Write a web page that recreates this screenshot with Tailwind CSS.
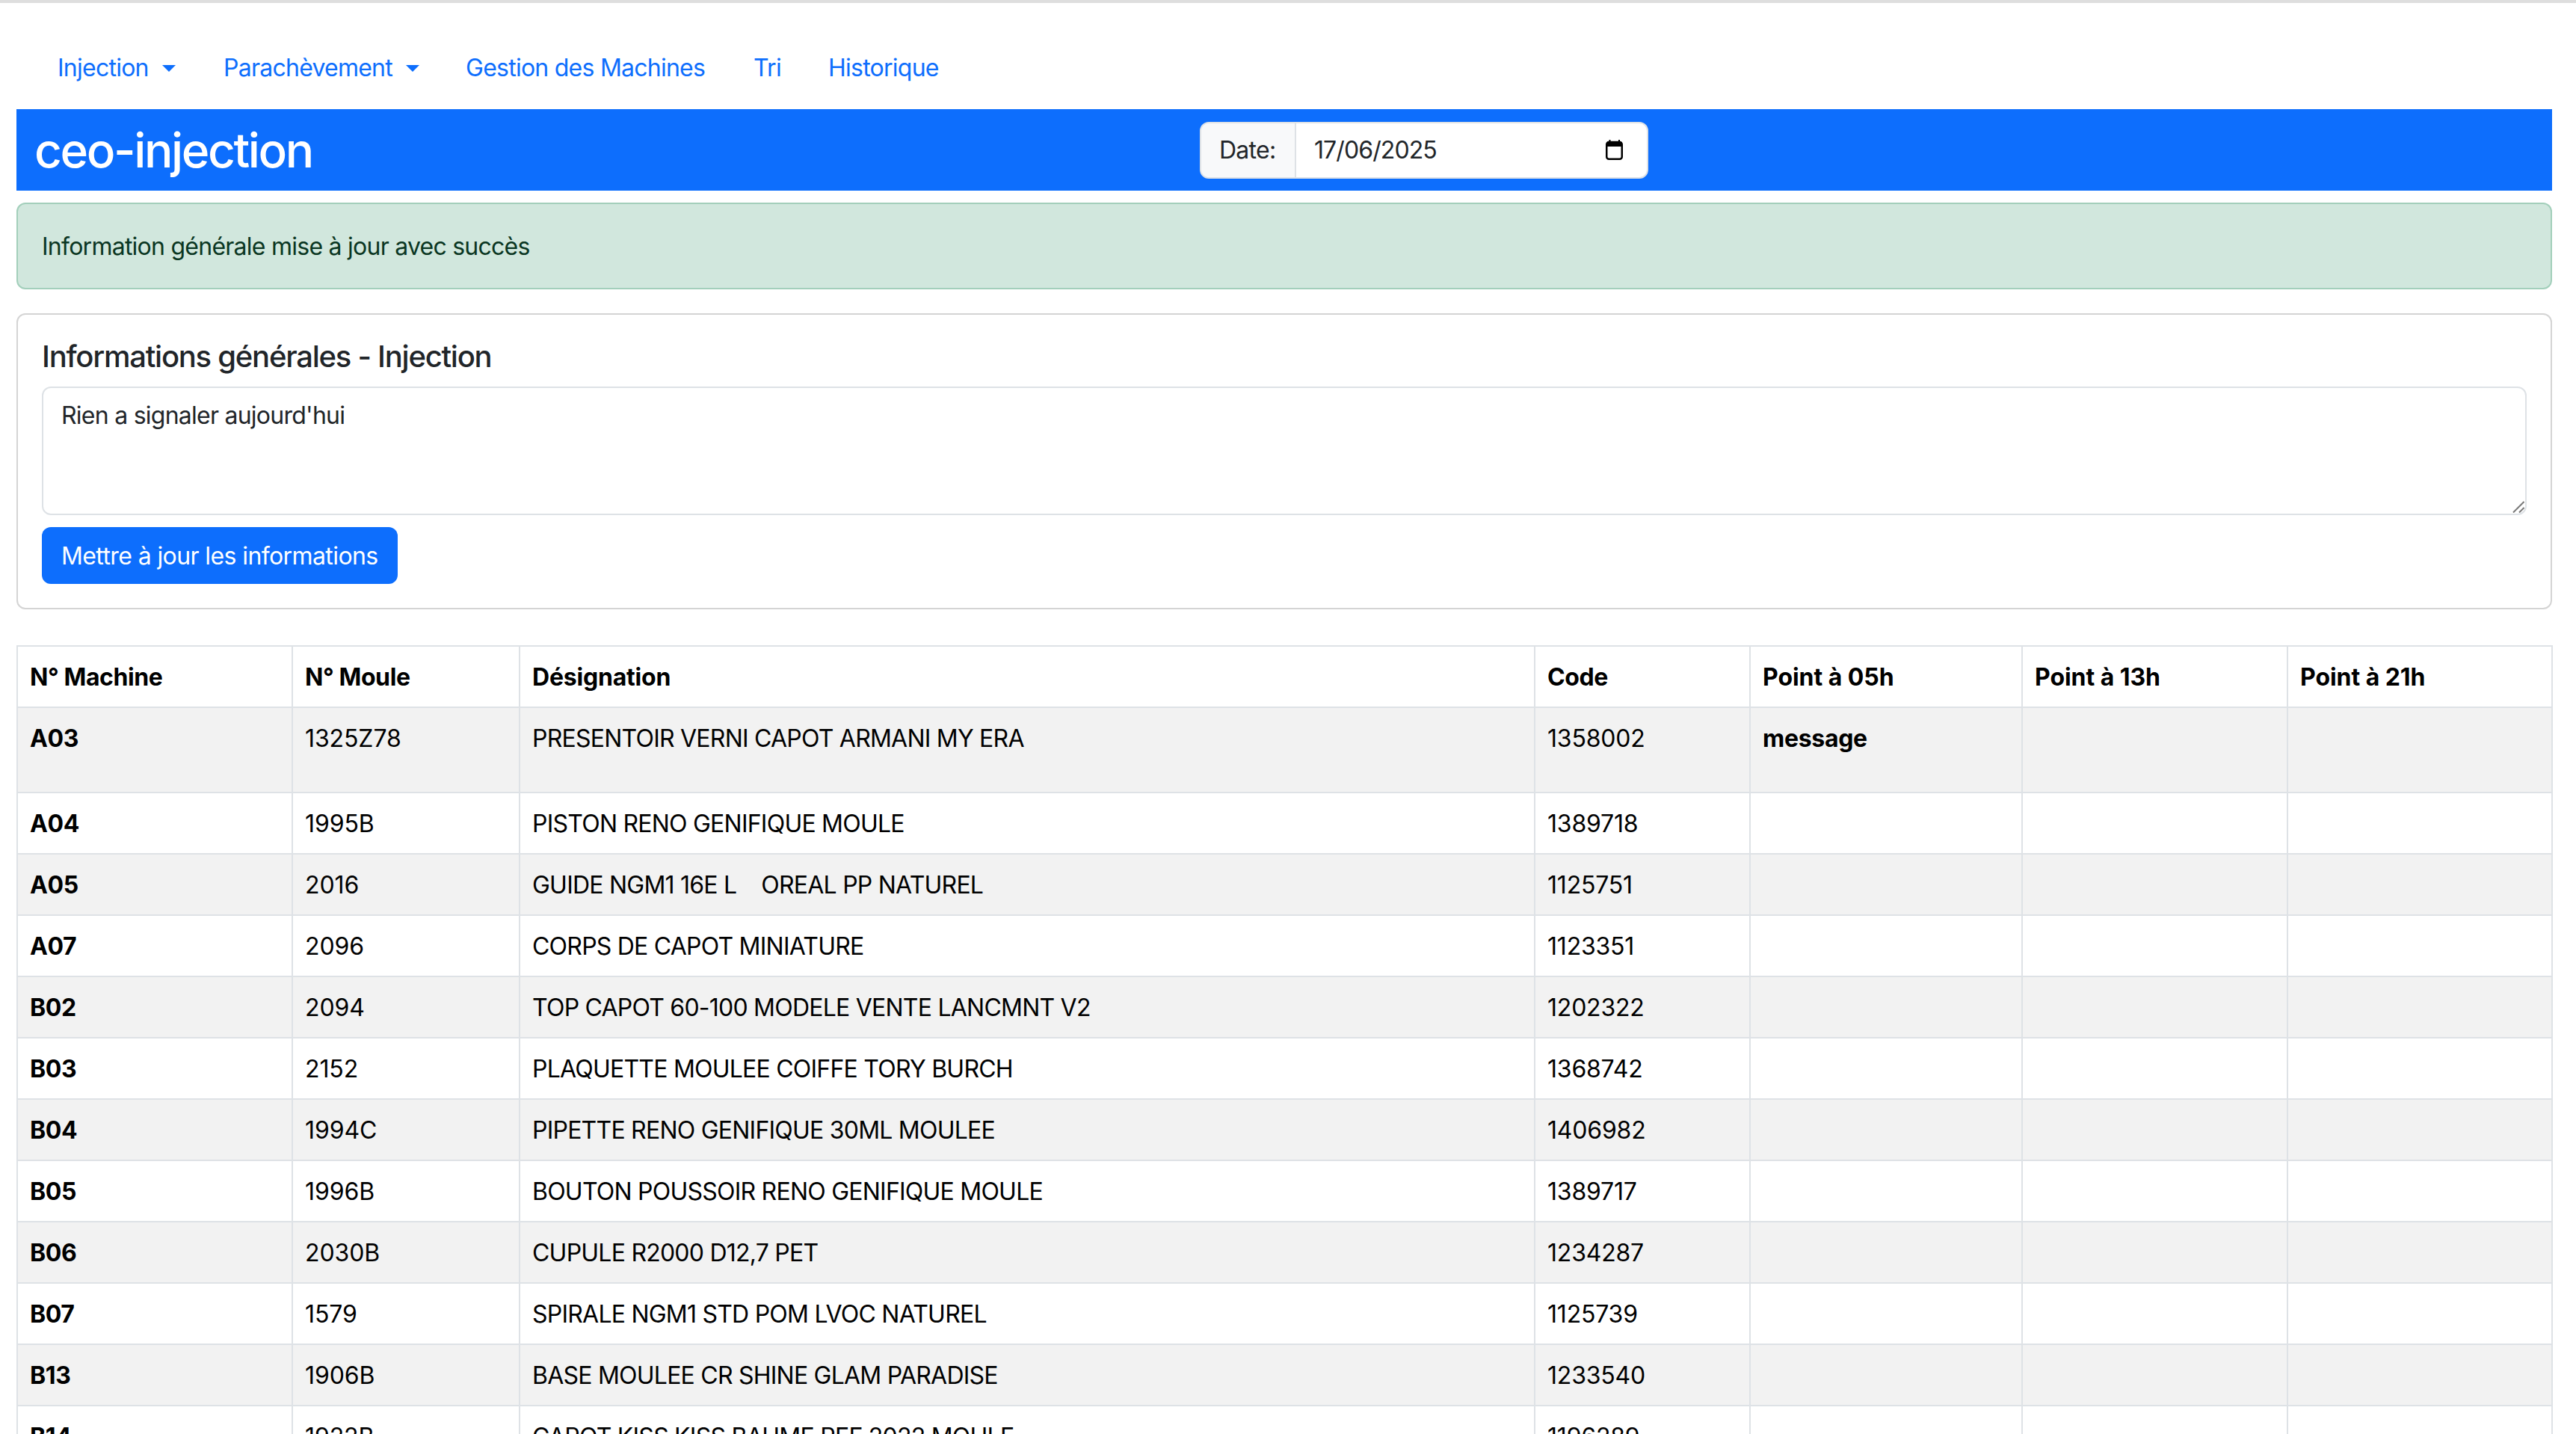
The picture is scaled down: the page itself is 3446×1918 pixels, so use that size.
<!DOCTYPE html>
<html lang="fr">

<head>
    <title>ceo-injection</title>
    <meta charset="utf-8">
    <script src="https://cdn.jsdelivr.net/npm/@tailwindcss/browser@4"></script>
</head>

<body class="h-[1918px] overflow-hidden bg-white font-['Inter',sans-serif] text-[32px] leading-[48px] tracking-[-0.75px] text-[#212529]">
    <div class="h-[4px] bg-[#dedede]"></div>

    <nav class="flex items-center h-[142px] pt-[32px] pl-[77px] text-[#0d6efd]">
        <a class="flex items-center w-[222px]">Injection<span class="ml-[18px] w-0 h-0 border-x-[9.6px] border-t-[9.6px] border-x-transparent border-t-[#0d6efd]"></span></a>
        <a class="flex items-center w-[324px]">Parachèvement<span class="ml-[18px] w-0 h-0 border-x-[9.6px] border-t-[9.6px] border-x-transparent border-t-[#0d6efd]"></span></a>
        <a class="w-[385px]">Gestion des Machines</a>
        <a class="w-[100px]">Tri</a>
        <a>Historique</a>
    </nav>

    <main class="ml-[22px] mr-[32px]">
        <header class="flex items-center h-[109px] bg-[#0d6efd] pl-[24px]">
            <h1 class="w-[1559px] text-[64px] leading-[77px] tracking-[-2.4px] font-medium text-white">ceo-injection</h1>
            <div class="flex h-[76px] w-[600px] rounded-[12px] border-2 border-[#dee2e6] bg-white">
                <span class="flex items-center w-[127px] px-[24px] border-r-2 border-[#dee2e6] bg-[#f8f9fa] rounded-l-[10px]">Date:</span>
                <div class="flex flex-1 items-center justify-between pl-[24px] pr-[32px]">
                    <span class="tracking-[-0.9px]">17/06/2025</span>
                    <svg class="w-[23px] h-[27px]" viewBox="0 0 23 27" fill="none">
                        <rect x="1.25" y="3" width="20.5" height="22.75" rx="3" stroke="#000" stroke-width="2.5"/>
                        <path d="M1.25 3h20.5v6h-20.5z" fill="#000"/>
                        <path d="M4.5 0h2v3h-2zM17 0h2v3h-2z" fill="#000"/>
                    </svg>
                </div>
            </div>
        </header>

        <div class="mt-[16px] rounded-[12px] border-2 border-[#a3cfbb] bg-[#d1e7dd] pt-[33px] pb-[31px] px-[32px] text-[#0a3622]">Information générale mise à jour avec succès</div>

        <section class="mt-[32px] rounded-[12px] border-2 border-[#d4d4d4] p-[32px]">
            <h5 class="text-[40px] leading-[48px] tracking-[-1.25px] font-medium">Informations générales - Injection</h5>
            <div class="relative mt-[16px]">
                <textarea class="block w-full h-[172px] rounded-[12px] border-2 border-[#dee2e6] px-[24px] pt-[13px] pb-[11px] resize-none">Rien a signaler aujourd'hui</textarea>
                <svg class="absolute right-[3px] bottom-[3px] w-[16px] h-[16px]" viewBox="0 0 16 16" fill="none">
                    <path d="M1 15.5 15.5 1M9 15.5 15.5 9" stroke="#777" stroke-width="2"/>
                </svg>
            </div>
            <button class="block mt-[16px] h-[76px] rounded-[12px] bg-[#0d6efd] px-[26px] pt-[1px] tracking-[-0.6px] text-white">Mettre à jour les informations</button>
        </section>

        <table class="mt-[48px] w-[3391px] table-fixed border-collapse border-2 border-[#dee2e6] text-black">
            <colgroup>
                <col class="w-[368px]">
                <col class="w-[304px]">
                <col class="w-[1358px]">
                <col class="w-[288px]">
                <col class="w-[364px]">
                <col class="w-[355px]">
                <col class="w-[354px]">
            </colgroup>
            <thead>
                <tr class="font-bold text-left tracking-[-0.4px]">
                    <th class="border-2 border-[#dee2e6] pt-[17px] pb-[15px] px-[16px]">N° Machine</th>
                    <th class="border-2 border-[#dee2e6] pt-[17px] pb-[15px] px-[16px]">N° Moule</th>
                    <th class="border-2 border-[#dee2e6] pt-[17px] pb-[15px] px-[16px] tracking-[-0.2px]">Désignation</th>
                    <th class="border-2 border-[#dee2e6] pt-[17px] pb-[15px] px-[16px]">Code</th>
                    <th class="border-2 border-[#dee2e6] pt-[17px] pb-[15px] px-[16px] tracking-[-0.05px]">Point à 05h</th>
                    <th class="border-2 border-[#dee2e6] pt-[17px] pb-[15px] px-[16px] tracking-[-0.05px]">Point à 13h</th>
                    <th class="border-2 border-[#dee2e6] pt-[17px] pb-[15px] px-[16px] tracking-[-0.05px]">Point à 21h</th>
                </tr>
            </thead>
            <tbody id="rows">
                <tr class="bg-[#f2f2f2] align-top">
                    <td class="border-2 border-[#dee2e6] pt-[17px] pb-[15px] px-[16px] font-bold tracking-[-0.4px]">A03</td>
                    <td class="border-2 border-[#dee2e6] pt-[17px] pb-[15px] px-[16px] tracking-[-0.1px]">1325Z78</td>
                    <td class="border-2 border-[#dee2e6] pt-[17px] pb-[15px] px-[16px] tracking-[-0.77px]">PRESENTOIR VERNI CAPOT ARMANI MY ERA</td>
                    <td class="border-2 border-[#dee2e6] pt-[17px] pb-[15px] px-[16px] tracking-[-0.2px]">1358002</td>
                    <td class="border-2 border-[#dee2e6] pt-[17px] pb-[15px] px-[16px] font-bold tracking-[-0.3px]"><p class="mb-[32px]">message</p></td>
                    <td class="border-2 border-[#dee2e6] pt-[17px] pb-[15px] px-[16px]"></td>
                    <td class="border-2 border-[#dee2e6] pt-[17px] pb-[15px] px-[16px]"></td>
                </tr>
            </tbody>
        </table>
    </main>

    <script>
        const rows = [
            ["A04", "1995B", "PISTON RENO GENIFIQUE MOULE", "1389718"],
            ["A05", "2016", "GUIDE NGM1 16E L&nbsp;&nbsp;&nbsp;&nbsp;OREAL PP NATUREL", "1125751"],
            ["A07", "2096", "CORPS DE CAPOT MINIATURE", "1123351"],
            ["B02", "2094", "TOP CAPOT 60-100 MODELE VENTE LANCMNT V2", "1202322"],
            ["B03", "2152", "PLAQUETTE MOULEE COIFFE TORY BURCH", "1368742"],
            ["B04", "1994C", "PIPETTE RENO GENIFIQUE 30ML MOULEE", "1406982"],
            ["B05", "1996B", "BOUTON POUSSOIR RENO GENIFIQUE MOULE", "1389717"],
            ["B06", "2030B", "CUPULE R2000 D12,7 PET", "1234287"],
            ["B07", "1579", "SPIRALE NGM1 STD POM LVOC NATUREL", "1125739"],
            ["B13", "1906B", "BASE MOULEE CR SHINE GLAM PARADISE", "1233540"],
            ["B14", "1922B", "CAPOT KISS KISS BAUME REF 2022 MOULE", "1196289"],
        ];
        const cell = "border-2 border-[#dee2e6] pt-[17px] pb-[15px] px-[16px]";
        document.getElementById("rows").insertAdjacentHTML("beforeend", rows.map((r, i) => `
            <tr class="${i % 2 ? "bg-[#f2f2f2]" : ""}">
                <td class="${cell} font-bold tracking-[-0.4px]">${r[0]}</td>
                <td class="${cell} tracking-[-0.1px]">${r[1]}</td>
                <td class="${cell} tracking-[-0.77px]">${r[2]}</td>
                <td class="${cell} tracking-[-0.2px]">${r[3]}</td>
                <td class="${cell}"></td>
                <td class="${cell}"></td>
                <td class="${cell}"></td>
            </tr>`).join(""));
    </script>
</body>

</html>
